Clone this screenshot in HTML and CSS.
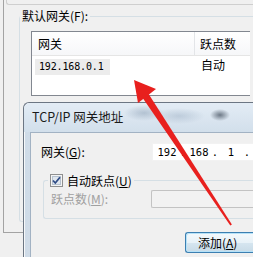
FILE: index.html
```html
<!DOCTYPE html>
<html lang="zh-CN">
  <head>
    <meta charset="UTF-8" />
    <title>TCP/IP 网关地址</title>
    <link rel="stylesheet" href="styles.css">
  </head>
  <body>
    <div class="props">
      <div class="prev-group"></div>
      <fieldset class="group gateways">
        <legend>默认网关(F):</legend>
        <div class="listview">
          <div class="lv-head">
            <div class="lv-gw">网关</div>
            <div class="lv-metric">跃点数</div>
          </div>
          <div class="lv-row">
            <div class="lv-gw"><span class="lv-sel mono">192.168.0.1</span></div>
            <div class="lv-metric">自动</div>
          </div>
        </div>
      </fieldset>
    </div>

    <div class="dialog">
      <div class="dlg-title">TCP/IP 网关地址</div>
      <div class="dlg-client">
        <div class="field">
          <span class="field-label">网关(<u>G</u>):</span>
          <div class="ipbox mono">
            <span class="oct">192</span><span class="dot">.</span>
            <span class="oct">168</span><span class="dot">.</span>
            <span class="oct">1</span><span class="dot">.</span>
          </div>
        </div>
        <fieldset class="group metric-group">
          <legend>
            <span class="check">
              <svg class="checkbox" width="13" height="13" viewBox="0 0 13 13">
                <rect x="0.5" y="0.5" width="12" height="12" fill="#f4f4f4" stroke="#8e8f8f" />
                <rect x="2.5" y="2.5" width="8" height="8" fill="#dfe6ee" stroke="#b6c2cf" />
                <path d="M3 6.5 L5.3 9 L10 3.3" fill="none" stroke="#2f4c86" stroke-width="1.8" />
              </svg>
              <span>自动跃点(<u>U</u>)</span>
            </span>
          </legend>
          <div class="field disabled">
            <span class="field-label">跃点数(<u>M</u>):</span>
            <div class="inputbox"></div>
          </div>
        </fieldset>
        <div class="actions">
          <button class="btn">添加(<u>A</u>)</button>
        </div>
      </div>
    </div>

    <svg class="arrow" width="253" height="257" viewBox="0 0 253 257">
      <polygon points="134,80 156,89 138,103" fill="#e8201e" />
      <polygon points="148,93 142,97 230.3,225.6 231.9,224.4" fill="#e8201e" />
    </svg>
  </body>
</html>
```

FILE: styles.css
```css
:root {
  --face: #f0f0f0;
  --group-line: #d5dfe5;
  --text: #000;
  --gray-text: #a0a0a0;
}
body {
  margin: 0;
  width: 253px;
  height: 257px;
  overflow: hidden;
  position: relative;
  background-color: var(--face);
  color: var(--text);
  font-family: "Noto Sans CJK SC", "Liberation Sans", sans-serif;
  font-size: 12px;
  line-height: 14px;
}
.mono {
  font-family: "DejaVu Sans Mono", "Liberation Mono", monospace;
  font-size: 10px;
}
u {
  text-decoration: underline;
}

/* window underneath */
.props {
  box-sizing: border-box;
  margin-left: 3px;
  width: 250px;
  height: 233px;
  border-left: 1px solid #a3a3a3;
  border-bottom: 1px solid #a3a3a3;
}
.prev-group {
  height: 4px;
  margin-left: 2px;
  border: 1px solid #cfcfcf;
  border-top: 0;
  border-right: 0;
  border-radius: 0 0 0 3px;
}
.group {
  margin: 0;
  padding: 0;
  border: 1px solid var(--group-line);
  border-right: 0;
  border-radius: 3px 0 0 3px;
  min-width: 0;
}
.group legend {
  padding: 0 2px;
  line-height: 12px;
}
.gateways {
  box-sizing: border-box;
  margin: 5px 0 0 15px;
  height: 212px;
}
.listview {
  box-sizing: border-box;
  margin: 9px 0 0 11px;
  width: 219px;
  height: 65px;
  border: 1px solid #828790;
  border-right: 0;
  background-color: #fff;
}
.lv-head {
  display: flex;
  height: 23px;
  border-bottom: 1px solid #e5e5e5;
  background: linear-gradient(#ffffff, #f6f7f9);
  line-height: 23px;
}
.lv-gw {
  width: 163px;
  padding-left: 6px;
  box-sizing: border-box;
}
.lv-head .lv-gw {
  border-right: 1px solid #e3e5e8;
}
.lv-metric {
  padding-left: 5px;
}
.lv-row {
  display: flex;
  margin-top: 1px;
  height: 17px;
  line-height: 16px;
}
.lv-row .lv-gw {
  padding-left: 3px;
}
.lv-row .lv-metric {
  padding-left: 6px;
}
.lv-sel {
  display: inline-block;
  width: 75px;
  height: 16px;
  padding-left: 4px;
  box-sizing: border-box;
  background-color: #ececec;
  letter-spacing: -0.15px;
}

/* dialog on top */
.dialog {
  position: absolute;
  left: 23px;
  top: 102px;
  box-sizing: border-box;
  width: 230px;
  height: 155px;
  padding-left: 6px;
  border: 1px solid #6c7683;
  border-right: 0;
  border-bottom: 0;
  border-radius: 6px 0 0 0;
  box-shadow: inset 1px 1px 0 rgba(255, 255, 255, 0.8);
  background: linear-gradient(90deg, #cfdbe7, #d9e4ee 40%, #cbd8e5);
}
.dlg-title {
  height: 29px;
  margin-left: -6px;
  padding: 6px 0 0 8px;
  box-sizing: border-box;
  border-radius: 6px 0 0 0;
  font-size: 12.5px;
  line-height: 16px;
  color: #1a1a1a;
  background:
    radial-gradient(ellipse 10px 6px at 196px 12px, rgba(90, 102, 116, 0.85), transparent),
    radial-gradient(ellipse 20px 8px at 120px 10px, rgba(150, 168, 188, 0.6), transparent),
    radial-gradient(ellipse 26px 8px at 155px 13px, rgba(160, 178, 198, 0.5), transparent),
    linear-gradient(#e3ecf5, #d2dfeb);
}
.dlg-client {
  box-sizing: border-box;
  height: 125px;
  border: 1px solid #a2b2c3;
  border-right: 0;
  border-bottom: 0;
  background-color: var(--face);
}
.field {
  display: flex;
  align-items: center;
}
.dlg-client > .field {
  margin-top: 10px;
  padding-left: 10px;
}
.field-label {
  width: 111px;
}
.ipbox {
  display: flex;
  align-items: center;
  height: 18px;
  width: 101px;
  padding-left: 2px;
  box-sizing: border-box;
  background-color: #fff;
  border: 1px solid #f2f2f2;
  border-right: 0;
  font-size: 10.5px;
}
.oct {
  width: 24px;
  text-align: center;
}
.dot {
  width: 8px;
  text-align: center;
}
.metric-group {
  box-sizing: border-box;
  margin: 13px 0 0 12px;
  width: 210px;
  padding-bottom: 10px;
}
.metric-group legend {
  margin-left: 4px;
  line-height: 13px;
}
.check {
  display: flex;
  align-items: center;
  gap: 4px;
}
.checkbox {
  display: block;
}
.disabled {
  margin-top: 3px;
  color: var(--gray-text);
}
.disabled .field-label {
  width: 107px;
  padding-left: 7px;
  box-sizing: border-box;
}
.inputbox {
  width: 103px;
  height: 18px;
  box-sizing: border-box;
  border: 1px solid #c3c3c3;
  border-right: 0;
  border-radius: 2px 0 0 2px;
  background-color: #f2f2f2;
}
.actions {
  margin: 13px 0 0 154px;
}
.btn {
  width: 68px;
  height: 21px;
  padding: 0 0 0 12px;
  text-align: left;
  border: 1px solid #3c7fb1;
  border-right: 0;
  border-radius: 3px 0 0 3px;
  box-shadow: inset 1px 1px 0 #b6e2f8, inset 0 -1px 0 #b6e2f8;
  background: linear-gradient(#f4f9fc, #e8f2f8 50%, #d6e6f0 51%, #c8dbe7);
  font-family: inherit;
  font-size: 12px;
  color: #000;
}

.arrow {
  position: absolute;
  left: 0;
  top: 0;
  pointer-events: none;
}
```
